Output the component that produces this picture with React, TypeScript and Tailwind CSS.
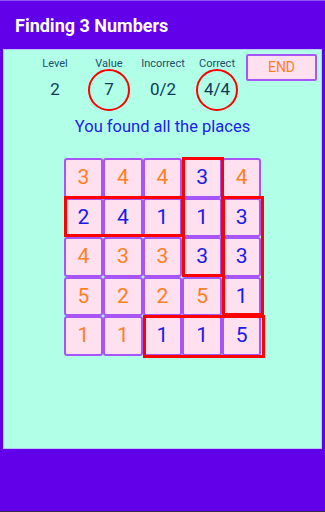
import React from "react";

const grid: { v: number; b: boolean }[][] = [
  [{ v: 3, b: false }, { v: 4, b: false }, { v: 4, b: false }, { v: 3, b: true }, { v: 4, b: false }],
  [{ v: 2, b: true }, { v: 4, b: true }, { v: 1, b: true }, { v: 1, b: true }, { v: 3, b: true }],
  [{ v: 4, b: false }, { v: 3, b: false }, { v: 3, b: false }, { v: 3, b: true }, { v: 3, b: true }],
  [{ v: 5, b: false }, { v: 2, b: false }, { v: 2, b: false }, { v: 5, b: false }, { v: 1, b: true }],
  [{ v: 1, b: false }, { v: 1, b: false }, { v: 1, b: true }, { v: 1, b: true }, { v: 5, b: true }],
];

function Stat({ label, value, circled }: { label: string; value: string; circled?: boolean }) {
  return (
    <div className="flex w-[54px] flex-col items-center">
      <div className="text-[11px] leading-[13px] text-[#1b4f6b]">{label}</div>
      <div
        className={
          "-mt-[1px] flex h-[42px] w-[42px] items-center justify-center rounded-full text-[17px] text-[#0f3a56] " +
          (circled ? "border-[2px] border-[#ff0000]" : "border-[2px] border-transparent")
        }
      >
        {value}
      </div>
    </div>
  );
}

export default function App() {
  return (
    <div
      className="flex h-[512px] w-[325px] flex-col bg-[#6200ea]"
      style={{ fontFamily: "Roboto, 'Noto Sans', sans-serif" }}
    >
      <div className="flex h-[49px] items-center border-t border-[#8f55f0] pl-[15px] text-[18px] font-bold text-white">
        Finding 3 Numbers
      </div>
      <div className="mx-[3px] flex h-[400px] flex-col border border-[#b8c6f2] bg-[#b2ffe8]">
        <div className="flex items-start pt-[4px]">
          <div className="ml-[24px] mt-[3px] flex">
            <Stat label="Level" value="2" />
            <Stat label="Value" value="7" circled />
            <Stat label="Incorrect" value="0/2" />
            <Stat label="Correct" value="4/4" circled />
          </div>
          <div className="ml-[2px] flex h-[27px] w-[71px] items-center justify-center rounded-[2px] border-[2px] border-[#a855f7] bg-[#ffe0ee] text-[14px] text-[#ff7f1e]">
            END
          </div>
        </div>
        <div className="mt-[6px] text-center text-[16.5px] leading-[20px] text-[#2121e6]">
          You found all the places
        </div>
        <div className="relative mx-auto mt-[21px] w-[198px]">
          <div className="grid grid-cols-5">
            {grid.map((row, r) =>
              row.map((c, i) => (
                <div
                  key={r + "-" + i}
                  className={
                    "flex h-[39.5px] items-center justify-center rounded-[3px] border-[2px] border-[#a855f7] bg-[#ffe0ee] text-[21px] " +
                    (c.b ? "text-[#1a1ae8]" : "text-[#ff7f1e]")
                  }
                >
                  {c.v}
                </div>
              ))
            )}
          </div>
          <div className="absolute left-[118px] top-[-1px] h-[120px] w-[42px] border-[3px] border-[#ff0000]" />
          <div className="absolute left-[0px] top-[38px] h-[41px] w-[120px] border-[3px] border-[#ff0000]" />
          <div className="absolute left-[158px] top-[38px] h-[120px] w-[42px] border-[3px] border-[#ff0000]" />
          <div className="absolute left-[79px] top-[157px] h-[43px] w-[122px] border-[3px] border-[#ff0000]" />
        </div>
      </div>
      <div className="flex-1 border-b border-[#3a2a4a]" />
    </div>
  );
}
